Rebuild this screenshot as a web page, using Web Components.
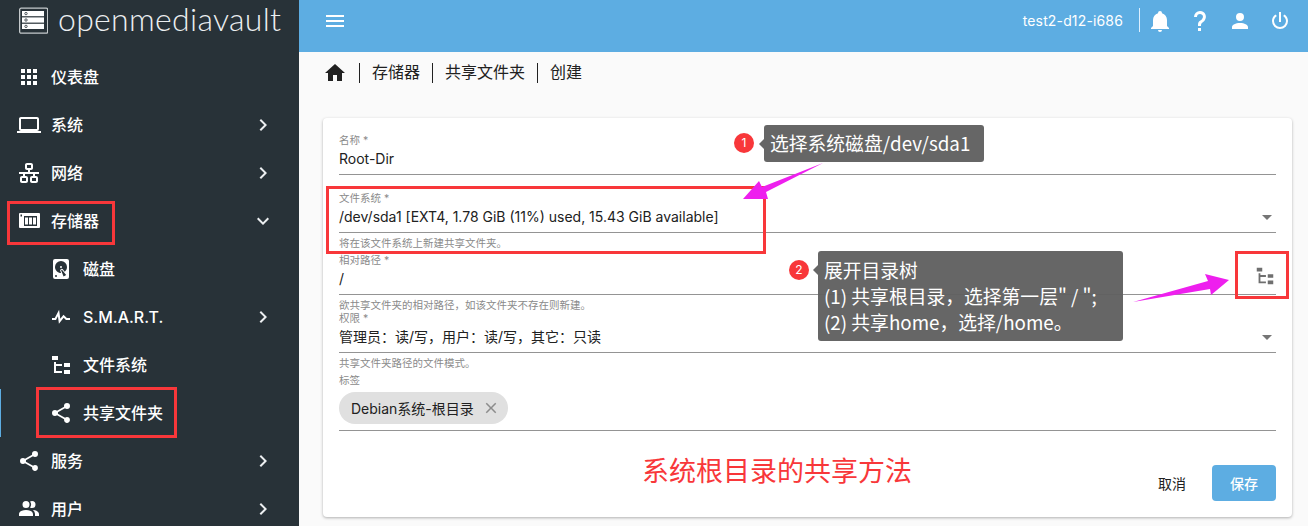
<!DOCTYPE html>
<html lang="zh">
<head>
<meta charset="utf-8">
<title>openmediavault</title>
<style>
  html, body { margin: 0; height: 526px; overflow: hidden; }
  body {
    position: relative;
    display: grid;
    grid-template-columns: 299px 1fr;
    font-family: Inter, "Noto Sans CJK SC", sans-serif;
    font-size: 14px;
    color: #212121;
    background: #fafafa;
  }
</style>
</head>
<body>
<om-sidebar>
  <om-nav-item icon="apps" label="仪表盘"></om-nav-item>
  <om-nav-item icon="laptop" label="系统" arrow="right"></om-nav-item>
  <om-nav-item icon="lan" label="网络" arrow="right"></om-nav-item>
  <om-nav-item icon="card" label="存储器" arrow="down"></om-nav-item>
  <om-nav-item icon="disk" label="磁盘" sub></om-nav-item>
  <om-nav-item icon="pulse" label="S.M.A.R.T." sub arrow="right"></om-nav-item>
  <om-nav-item icon="tree" label="文件系统" sub></om-nav-item>
  <om-nav-item icon="share" label="共享文件夹" sub active></om-nav-item>
  <om-nav-item icon="share" label="服务" arrow="right"></om-nav-item>
  <om-nav-item icon="users" label="用户" arrow="right"></om-nav-item>
</om-sidebar>
<om-main>
  <om-topbar host="test2-d12-i686"></om-topbar>
  <om-breadcrumb items="存储器,共享文件夹,创建"></om-breadcrumb>
  <om-card>
    <om-field label="名称 *" value="Root-Dir" style="height:58px"></om-field>
    <om-field label="文件系统 *" value="/dev/sda1 [EXT4, 1.78 GiB (11%) used, 15.43 GiB available]" hint="将在该文件系统上新建共享文件夹。" select style="height:62px"></om-field>
    <om-field label="相对路径 *" value="/" hint="欲共享文件夹的相对路径，如该文件夹不存在则新建。" tree style="height:58px"></om-field>
    <om-field label="权限 *" value="管理员：读/写，用户：读/写，其它：只读" hint="共享文件夹路径的文件模式。" select style="height:62px"></om-field>
    <om-field label="标签" chip="Debian系统-根目录"></om-field>
    <om-actions slot="footer"></om-actions>
  </om-card>
</om-main>
<om-annotations></om-annotations>

<script>
  const ICONS = {
    apps: "M16,20H20V16H16M16,14H20V10H16M10,8H14V4H10M16,8H20V4H16M10,14H14V10H10M4,14H8V10H4M4,20H8V16H4M10,20H14V16H10M4,8H8V4H4V8Z",
    laptop: "M4,6H20V16H4M20,18A2,2 0 0,0 22,16V6C22,4.89 21.1,4 20,4H4C2.89,4 2,4.89 2,6V16A2,2 0 0,0 4,18H0V20H24V18H20Z",
    lan: "M10,2C8.89,2 8,2.89 8,4V7C8,8.11 8.89,9 10,9H11V11H2V13H6V15H5C3.89,15 3,15.89 3,17V20C3,21.11 3.89,22 5,22H9C10.11,22 11,21.11 11,20V17C11,15.89 10.11,15 9,15H8V13H16V15H15C13.89,15 13,15.89 13,17V20C13,21.11 13.89,22 15,22H19C20.11,22 21,21.11 21,20V17C21,15.89 20.11,15 19,15H18V13H22V11H13V9H14C15.11,9 16,8.11 16,7V4C16,2.89 15.11,2 14,2H10M10,4H14V7H10V4M5,17H9V20H5V17M15,17H19V20H15V17Z",
    card: "M3,4H22A1,1 0 0,1 23,5V18A1,1 0 0,1 22,19H3A1,1 0 0,1 2,18V5A1,1 0 0,1 3,4ZM7,7V17H20V7ZM8,8.5H11V15.5H8ZM12,8.5H15V15.5H12ZM16,8.5H19V15.5H16ZM3.5,5.5V7.5H5V5.5Z",
    disk: "M6,2H18A2,2 0 0,1 20,4V20A2,2 0 0,1 18,22H6A2,2 0 0,1 4,20V4A2,2 0 0,1 6,2M12,4A6,6 0 0,0 6,10C6,13.31 8.69,16 12.1,16L11.22,13.77C10.95,13.29 11.11,12.68 11.59,12.4L12.45,11.9C12.93,11.63 13.54,11.79 13.82,12.27L15.74,14.69C17.12,13.59 18,11.9 18,10A6,6 0 0,0 12,4M12,9A1,1 0 0,1 13,10A1,1 0 0,1 12,11A1,1 0 0,1 11,10A1,1 0 0,1 12,9M7,18A1,1 0 0,0 6,19A1,1 0 0,0 7,20A1,1 0 0,0 8,19A1,1 0 0,0 7,18M12.09,13.27L14.58,19.58L17.17,18.08L12.95,12.77L12.09,13.27Z",
    pulse: "M3,13H5.79L10.1,4.79L11.28,13.75L14.5,9.66L17.83,13H21V15H17L14.67,12.67L9.92,18.73L8.94,11.31L7,15H3V13Z",
    tree: "M3,3H9V7H3V3M15,10H21V14H15V10M15,17H21V21H15V17M13,13H7V18H13V20H7L5,20V9H7V11H13V13Z",
    share: "M18,16.08C17.24,16.08 16.56,16.38 16.04,16.85L8.91,12.7C8.96,12.47 9,12.24 9,12C9,11.76 8.96,11.53 8.91,11.3L15.96,7.19C16.5,7.69 17.21,8 18,8A3,3 0 0,0 21,5A3,3 0 0,0 18,2A3,3 0 0,0 15,5C15,5.24 15.04,5.47 15.09,5.7L8.04,9.81C7.5,9.31 6.79,9 6,9A3,3 0 0,0 3,12A3,3 0 0,0 6,15C6.79,15 7.5,14.69 8.04,14.19L15.16,18.34C15.11,18.55 15.08,18.77 15.08,19C15.08,20.61 16.39,21.91 18,21.91C19.61,21.91 20.92,20.61 20.92,19A2.92,2.92 0 0,0 18,16.08Z",
    users: "M16 17V19H2V17S2 13 9 13 16 17 16 17M12.5 7.5A3.5 3.5 0 1 0 9 11A3.5 3.5 0 0 0 12.5 7.5M15.94 13A5.32 5.32 0 0 1 18 17V19H22V17S22 13.37 15.94 13M15 4A3.39 3.39 0 0 0 13.07 4.59A5 5 0 0 1 13.07 10.41A3.39 3.39 0 0 0 15 11A3.5 3.5 0 0 0 15 4Z",
    bell: "M21,19V20H3V19L5,17V11C5,7.9 7.03,5.17 10,4.29C10,4.19 10,4.1 10,4A2,2 0 0,1 12,2A2,2 0 0,1 14,4C14,4.1 14,4.19 14,4.29C16.97,5.17 19,7.9 19,11V17L21,19M14,21A2,2 0 0,1 12,23A2,2 0 0,1 10,21",
    help: "M10,19H13V22H10V19M12,2C17.35,2.22 19.68,7.62 16.5,11.67C15.67,12.67 14.33,13.33 13.67,14.17C13,15 13,16 13,17H10C10,15.33 10,13.92 10.67,12.92C11.33,11.92 12.67,11.33 13.5,10.67C15.92,8.43 15.32,5.26 12,5A3,3 0 0,0 9,8H6A6,6 0 0,1 12,2Z",
    account: "M12,4A4,4 0 0,1 16,8A4,4 0 0,1 12,12A4,4 0 0,1 8,8A4,4 0 0,1 12,4M12,14C16.42,14 20,15.79 20,18V20H4V18C4,15.79 7.58,14 12,14Z",
    power: "M16.56,5.44L15.11,6.89C16.84,7.94 18,9.83 18,12A6,6 0 0,1 12,18A6,6 0 0,1 6,12C6,9.83 7.16,7.94 8.88,6.88L7.44,5.44C5.36,6.88 4,9.28 4,12A8,8 0 0,0 12,20A8,8 0 0,0 20,12C20,9.28 18.64,6.88 16.56,5.44M13,3H11V13H13",
    home: "M10,20V14H14V20H19V12H22L12,3L2,12H5V20H10Z",
    menu: "M3,6H21V8H3V6M3,11H21V13H3V11M3,16H21V18H3V16Z",
    right: "M8.59,16.58L13.17,12L8.59,7.41L10,6L16,12L10,18L8.59,16.58Z",
    down: "M7.41,8.58L12,13.17L16.59,8.58L18,10L12,16L6,10L7.41,8.58Z",
    close: "M19,6.41L17.59,5L12,10.59L6.41,5L5,6.41L10.59,12L5,17.59L6.41,19L12,13.41L17.59,19L19,17.59L13.41,12L19,6.41Z"
  };

  const icon = (name, size = 24) =>
    `<svg width="${size}" height="${size}" viewBox="0 0 24 24" fill="currentColor" style="display:block;flex:none"><path d="${ICONS[name]}"/></svg>`;

  class OmSidebar extends HTMLElement {
    connectedCallback() {
      this.attachShadow({mode: 'open'}).innerHTML = `<style>
        :host { display: block; height: 526px; overflow: hidden; background: #283238; color: #fff; }
        .logo { display: flex; align-items: center; height: 41px; padding: 0 0 12px 18px; gap: 10px; }
        .name { font: 300 32px/1 Lato, sans-serif; color: #eceff1; letter-spacing: .3px; margin-top: -3px; }
      </style>
      <div class="logo">
        <svg width="30" height="27" viewBox="0 0 30 27">
          <rect x="1.65" y="1.15" width="28" height="25" rx="1.5" fill="none" stroke="#c4c9cb" stroke-width="1.3"/>
          <rect x="4" y="4" width="22" height="5.2" fill="#fff"/>
          <rect x="4" y="10.4" width="22" height="5.2" fill="#fff"/>
          <rect x="4" y="16.8" width="22" height="5.2" fill="#fff"/>
          <circle cx="8" cy="6.6" r="1.2" fill="#fff" stroke="#283238" stroke-width=".8"/>
          <circle cx="8" cy="13" r="1.2" fill="#fff" stroke="#283238" stroke-width=".8"/>
          <circle cx="8" cy="19.4" r="1.2" fill="#fff" stroke="#283238" stroke-width=".8"/>
        </svg>
        <span class="name">openmediavault</span>
      </div>
      <slot></slot>`;
    }
  }

  class OmNavItem extends HTMLElement {
    connectedCallback() {
      const arrow = this.getAttribute('arrow');
      this.attachShadow({mode: 'open'}).innerHTML = `<style>
        :host { display: flex; align-items: center; height: 48px; position: relative; color: #fff; font-size: 16px; font-weight: 500; }
        :host([sub]) { padding-left: 32px; }
        .ic { margin: 0 10px 0 17px; }
        .tx { flex: 1; line-height: 22px; }
        .ar { margin-right: 24px; color: #eceff1; }
        :host([active])::before { content: ""; position: absolute; left: 0; top: 0; bottom: 0; width: 1px; background: #5dade2; }
      </style>
      <span class="ic">${icon(this.getAttribute('icon'))}</span>
      <span class="tx">${this.getAttribute('label')}</span>
      ${arrow ? `<span class="ar">${icon(arrow)}</span>` : ''}`;
    }
  }

  class OmMain extends HTMLElement {
    connectedCallback() {
      this.attachShadow({mode: 'open'}).innerHTML = `<style>
        :host { display: flex; flex-direction: column; height: 526px; min-width: 0; }
      </style><slot></slot>`;
    }
  }

  class OmTopbar extends HTMLElement {
    connectedCallback() {
      this.attachShadow({mode: 'open'}).innerHTML = `<style>
        :host { display: flex; align-items: center; height: 52px; box-sizing: border-box; padding: 0 8px 10px 24px; background: #5dade2; color: #fff; }
        .host { margin: 0 0 2px auto; font-size: 14px; letter-spacing: .15px; padding-right: 16px; border-right: 1px solid #dcefff; height: 24px; display: flex; align-items: center; }
        .btn { width: 40px; display: flex; justify-content: center; }
      </style>
      ${icon('menu')}
      <span class="host">${this.getAttribute('host')}</span>
      <span class="btn">${icon('bell')}</span>
      <span class="btn">${icon('help')}</span>
      <span class="btn">${icon('account')}</span>
      <span class="btn">${icon('power')}</span>`;
    }
  }

  class OmBreadcrumb extends HTMLElement {
    connectedCallback() {
      const items = this.getAttribute('items').split(',');
      this.attachShadow({mode: 'open'}).innerHTML = `<style>
        :host { display: flex; align-items: center; height: 42px; padding-left: 24px; margin-bottom: 24px; color: #212121; font-size: 16px; }
        .it { display: flex; align-items: center; height: 20px; margin-left: 12px; padding-left: 12px; border-left: 1px solid #212121; line-height: 20px; }
        .it b { font-weight: 400; position: relative; top: -1px; }
      </style>
      ${icon('home')}
      ${items.map(i => `<span class="it"><b>${i}</b></span>`).join('')}`;
    }
  }

  class OmCard extends HTMLElement {
    connectedCallback() {
      this.attachShadow({mode: 'open'}).innerHTML = `<style>
        :host { display: flex; flex-direction: column; height: 399px; box-sizing: border-box; margin: 0 16px 0 24px; padding: 15px 16px 16px; background: #fff; border-radius: 4px; box-shadow: 0 1px 3px rgba(0,0,0,.3); }
        .foot { margin-top: auto; }
      </style>
      <slot></slot>
      <div class="foot"><slot name="footer"></slot></div>`;
    }
  }

  class OmField extends HTMLElement {
    connectedCallback() {
      const get = n => this.getAttribute(n);
      let body;
      if (this.hasAttribute('chip')) {
        body = `<div class="chips"><span class="chip">${get('chip')}<span class="x">${icon('close', 18)}</span></span></div>`;
      } else {
        body = `<div class="row"><span class="val">${get('value')}</span>
          ${this.hasAttribute('select') ? '<span class="caret"></span>' : ''}
          ${this.hasAttribute('tree') ? `<span class="tr">${icon('tree', 22)}</span>` : ''}</div>`;
      }
      this.attachShadow({mode: 'open'}).innerHTML = `<style>
        :host { display: block; }
        .lab { font-size: 10.5px; line-height: 16px; color: #8a8a8a; }
        .row { display: flex; align-items: center; height: 26px; box-sizing: border-box; border-bottom: 1px solid #949494; padding-bottom: 5px; }
        .val { flex: 1; font-size: 14px; line-height: 20px; color: #212121; }
        .caret { width: 0; height: 0; margin-right: 4px; border: 5px solid transparent; border-top-color: #757575; border-bottom: 0; }
        .tr { color: #6f6f6f; margin: -6px 0 0; }
        .hint { font-size: 10.5px; line-height: 14px; margin-top: 4px; color: #8a8a8a; }
        .chips { border-bottom: 1px solid #949494; padding: 3px 0 6px; }
        .chip { display: inline-flex; align-items: center; height: 32px; padding: 0 8px 0 12px; border-radius: 16px; background: #e0e0e0; font-size: 14px; }
        .x { color: #8c8c8c; margin-left: 8px; }
      </style>
      <div class="lab">${get('label')}</div>
      ${body}
      ${get('hint') ? `<div class="hint">${get('hint')}</div>` : ''}`;
    }
  }

  class OmActions extends HTMLElement {
    connectedCallback() {
      this.attachShadow({mode: 'open'}).innerHTML = `<style>
        :host { display: flex; justify-content: flex-end; gap: 8px; }
        span { width: 64px; height: 36px; display: flex; align-items: center; justify-content: center; border-radius: 4px; font-size: 14px; }
        .save { background: #5dade2; color: #fff; font-weight: 500; }
      </style>
      <span>取消</span><span class="save">保存</span>`;
    }
  }

  class OmAnnotations extends HTMLElement {
    connectedCallback() {
      this.attachShadow({mode: 'open'}).innerHTML = `<style>
        :host { position: absolute; inset: 0; pointer-events: none; font-family: "Noto Sans CJK SC", sans-serif; }
        .box { position: absolute; box-sizing: border-box; border: 3px solid #f8373a; }
        .badge { position: absolute; width: 20px; height: 20px; border-radius: 50%; background: #f8373a; color: #fff; font: 12px/20px Inter, sans-serif; text-align: center; }
        .tip { position: absolute; box-sizing: border-box; background: rgba(96,96,96,.96); color: #fff; border-radius: 3px; padding: 6px; font-size: 18.8px; line-height: 26px; white-space: pre; }
        .tip::before { content: ""; position: absolute; left: -5px; top: 14px; border: 5px solid transparent; border-left: 0; border-right-color: #666; }
        .title { position: absolute; left: 642px; top: 450px; font-size: 27px; line-height: 40px; color: #f8373a; white-space: nowrap; }
        svg { position: absolute; left: 0; top: 0; }
      </style>
      <div class="box" style="left:7px;top:201px;width:108px;height:44px"></div>
      <div class="box" style="left:36px;top:387px;width:141px;height:51px"></div>
      <div class="box" style="left:326px;top:186px;width:440px;height:68px"></div>
      <div class="box" style="left:1235px;top:251px;width:54px;height:48px"></div>
      <svg width="1308" height="526">
        <polygon fill="#ee1fee" points="823,163 762,187 759,181 743,199 768,199 766,192"/>
        <polygon fill="#ee1fee" points="1133,302 1208,281 1205,274 1229,280 1211,295 1210,289"/>
      </svg>
      <span class="badge" style="left:734px;top:133px">1</span>
      <div class="tip" style="left:764px;top:125px;width:220px;height:37px;padding-top:5px">选择系统磁盘/dev/sda1</div>
      <span class="badge" style="left:789px;top:260px">2</span>
      <div class="tip" style="left:818px;top:251px;width:305px;height:90px">展开目录树
(1) 共享根目录，选择第一层" / ";
(2) 共享home，选择/home。</div>
      <span class="title">系统根目录的共享方法</span>`;
    }
  }

  customElements.define('om-sidebar', OmSidebar);
  customElements.define('om-nav-item', OmNavItem);
  customElements.define('om-main', OmMain);
  customElements.define('om-topbar', OmTopbar);
  customElements.define('om-breadcrumb', OmBreadcrumb);
  customElements.define('om-card', OmCard);
  customElements.define('om-field', OmField);
  customElements.define('om-actions', OmActions);
  customElements.define('om-annotations', OmAnnotations);
</script>
</body>
</html>
